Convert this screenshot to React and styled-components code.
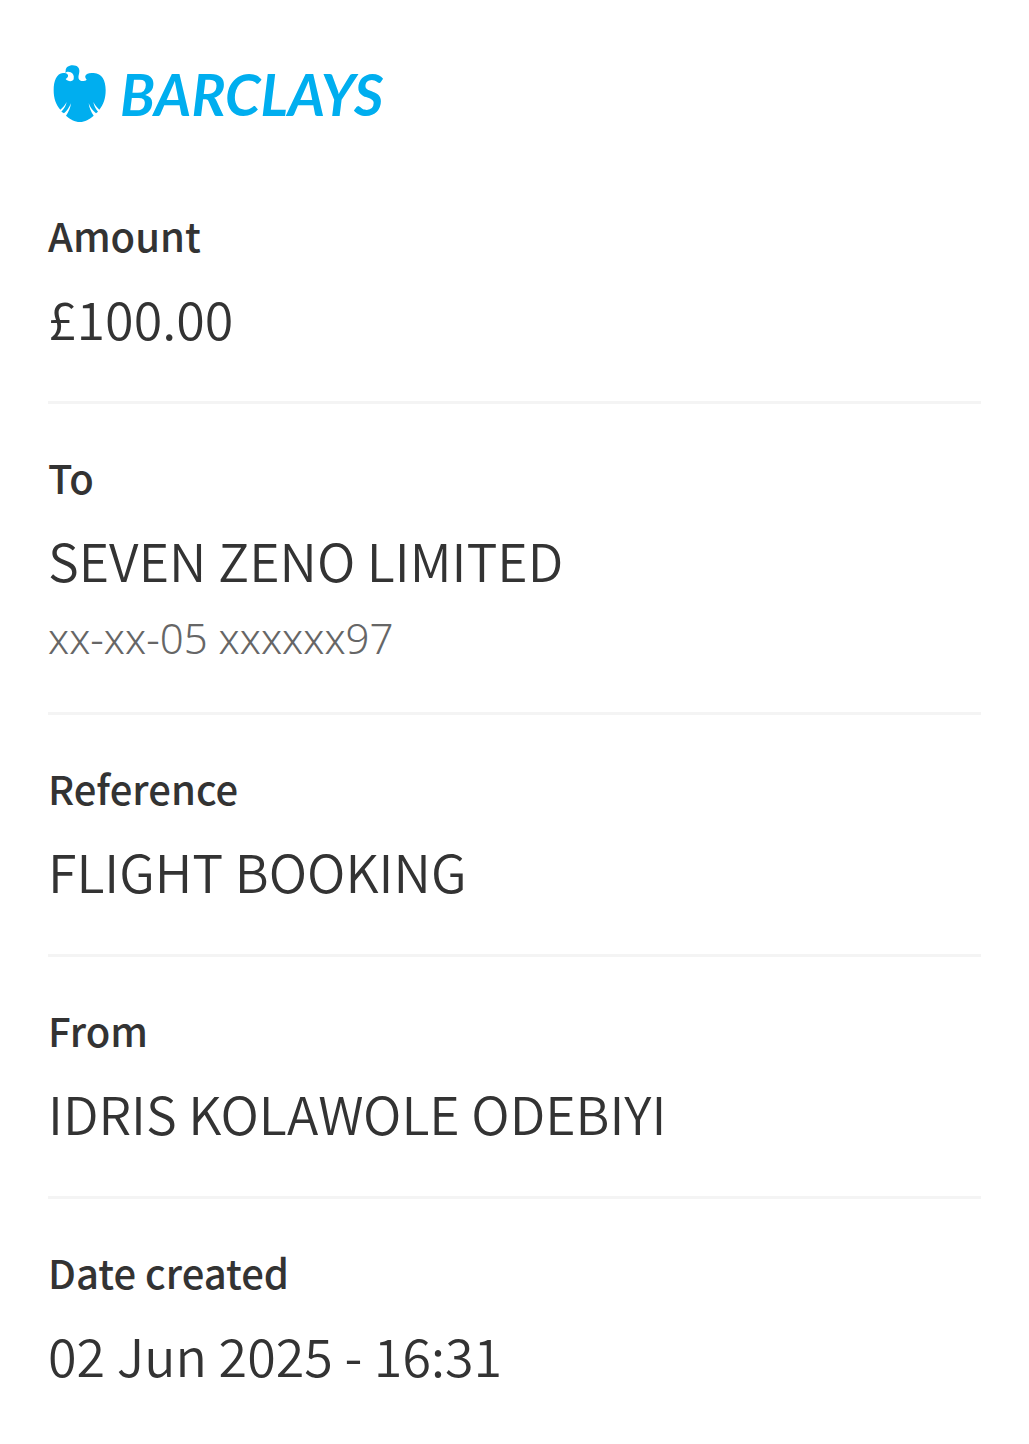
import React from 'react';
import styled, { createGlobalStyle } from 'styled-components';

const GlobalStyle = createGlobalStyle`
  body {
    margin: 0;
    background: #fff;
    color: #333;
    font-family: "Noto Sans CJK SC", "Noto Sans", sans-serif;
  }
`;

const Receipt = styled.main`
  padding: 60px 48px 0;
`;

const Brand = styled.header`
  display: flex;
  align-items: center;
  gap: 14px;
  height: 68px;
  margin-bottom: 34px;
  padding-left: 5px;
  color: #00aeef;
`;

const Eagle = styled.svg`
  width: 53px;
  height: 60px;
  fill: currentColor;
`;

const Wordmark = styled.span`
  font-family: Lato, sans-serif;
  font-size: 57px;
  font-weight: 700;
  font-style: italic;
  line-height: 68px;
`;

const Details = styled.dl`
  margin: 0;
`;

const Row = styled.div`
  display: flex;
  flex-direction: column;
  gap: 26px;
  padding: 48px 0 51px;

  & + & {
    border-top: 3px solid #f4f4f4;
  }
`;

const Label = styled.dt`
  font-size: 40px;
  font-weight: 500;
  line-height: 50px;
`;

const Value = styled.dd`
  margin: 0;
  font-size: 52px;
  font-weight: 350;
  line-height: 64px;
`;

const Account = styled.dd`
  margin: 0 0 4px;
  color: #666;
  font-family: "Noto Sans", sans-serif;
  font-size: 42px;
  font-weight: 300;
  line-height: 39px;
`;

const rows = [
  { label: 'Amount', value: '£100.00' },
  { label: 'To', value: 'SEVEN ZENO LIMITED', account: 'xx-xx-05 xxxxxx97' },
  { label: 'Reference', value: 'FLIGHT BOOKING' },
  { label: 'From', value: 'IDRIS KOLAWOLE ODEBIYI' },
  { label: 'Date created', value: '02 Jun 2025 - 16:31' },
];

export default function App() {
  return (
    <>
      <GlobalStyle />
      <Receipt>
        <Brand>
          <Eagle viewBox="27 25 159 180" aria-hidden="true">
            <path d="M65 45C65 36 73 29 86 29C101 29 107 38 106 48C105 56 102 62 104 69C107 77 120 79 128 72C122 66 122 59 129 55C134 52 141 51 149 52C174 53 185 74 185 104C185 128 178 148 166 162C159 156 153 149 148 139C150 150 155 160 162 168L156 173C147 166 139 156 134 143C136 157 141 169 149 180C137 191 122 199 108 199C92 199 78 191 66 180C74 169 79 157 81 143C75 156 69 166 60 173L52 168C60 160 66 150 68 139C63 149 57 156 49 162C36 148 29 128 29 104C29 74 38 54 57 52C66 51 74 55 72 62C71 66 68 68 65 70C71 78 87 79 89 70C91 60 87 53 80 50C74 47 68 47 64 52Z" />
          </Eagle>
          <Wordmark>BARCLAYS</Wordmark>
        </Brand>
        <Details>
          {rows.map(({ label, value, account }) => (
            <Row key={label}>
              <Label>{label}</Label>
              <Value>{value}</Value>
              {account && <Account>{account}</Account>}
            </Row>
          ))}
        </Details>
      </Receipt>
    </>
  );
}
